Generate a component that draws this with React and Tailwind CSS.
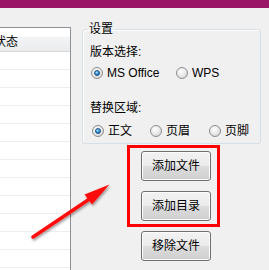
import React from "react";

const font = { fontFamily: '"Liberation Sans", "Noto Sans CJK SC", sans-serif' };

function Radio({ checked, label, className }) {
  return (
    <div className={`flex items-center gap-[4px] ${className || ""}`}>
      <span className="w-[12px] h-[12px] rounded-full border border-[#8c8e90] bg-[radial-gradient(circle_at_40%_35%,#ffffff,#e6e6e6_55%,#c9c9c9)] flex items-center justify-center shrink-0">
        {checked && (
          <span className="w-[6px] h-[6px] rounded-full border border-[#1b4f80] bg-[radial-gradient(circle_at_40%_35%,#b5e6ff,#2b8fd6_55%,#0f4677)]" />
        )}
      </span>
      <span className="text-[12px] leading-[16px] text-black">{label}</span>
    </div>
  );
}

function WinButton({ children }) {
  return (
    <button className="w-[70px] h-[30px] rounded-[3px] border border-[#707070] bg-[linear-gradient(#f2f2f2,#ebebeb_50%,#dddddd_50%,#cfcfcf)] shadow-[inset_0_0_0_1px_#fcfcfc] text-[12px] text-black flex items-center justify-center">
      {children}
    </button>
  );
}

export default function App() {
  const rows = Array.from({ length: 12 });

  return (
    <div className="relative w-[269px] h-[270px] overflow-hidden bg-[#f0f0f0]" style={font}>
      {/* title bar remnant */}
      <div className="h-[8px] bg-[#9b1566] overflow-hidden">
        <div className="pl-[164px] -mt-[14px] text-[14px] leading-[14px] text-white">批量替换</div>
      </div>

      <div className="flex items-start">
        {/* file list */}
        <div className="w-[71px] h-[262px] mt-[19px] border-t border-r border-[#8e9196] bg-white">
          <div className="h-[24px] border-b border-[#d8d8d8] bg-[linear-gradient(#ffffff,#ffffff_35%,#f3f4f6_40%,#eaebec)] flex items-center pt-[5px]">
            <span className="-ml-[6px] text-[12px] leading-[16px] text-black">状态</span>
          </div>
          {rows.map((_, i) => (
            <div key={i} className="h-[18px] border-b border-[#eeeeee]" />
          ))}
        </div>

        {/* settings */}
        <div className="ml-[11px] flex flex-col">
          <fieldset className="w-[179px] h-[121px] mt-[15px] border border-[#d5dfe5] rounded-[3px] shadow-[inset_1px_1px_0_#ffffff]">
            <legend className="ml-[4px] px-[2px] text-[12px] leading-[12px] text-black">设置</legend>
            <div className="pl-[7px] mt-[9px] text-[12px] leading-[16px] text-black">版本选择:</div>
            <div className="flex pl-[8px] mt-[5px]">
              <Radio checked label="MS Office" className="w-[85px]" />
              <Radio label="WPS" />
            </div>
            <div className="pl-[7px] mt-[19px] text-[12px] leading-[16px] text-black">替换区域:</div>
            <div className="flex pl-[9px] mt-[7px]">
              <Radio checked label="正文" className="w-[58px]" />
              <Radio label="页眉" className="w-[59px]" />
              <Radio label="页脚" />
            </div>
          </fieldset>

          <div className="ml-[45px] mt-[1px] w-[93px] border-[3px] border-[#ff0000] pl-[11px] py-[3px] flex flex-col gap-[10px]">
            <WinButton>添加文件</WinButton>
            <WinButton>添加目录</WinButton>
          </div>

          <div className="ml-[59px] mt-[4px]">
            <WinButton>移除文件</WinButton>
          </div>
        </div>
      </div>

      {/* annotation arrow */}
      <svg className="absolute inset-0 pointer-events-none" width="269" height="270" viewBox="0 0 269 270">
        <defs>
          <filter id="sh" x="-20%" y="-20%" width="140%" height="140%">
            <feDropShadow dx="1" dy="2" stdDeviation="1.2" floodColor="#000" floodOpacity="0.35" />
          </filter>
        </defs>
        <g filter="url(#sh)">
          <line x1="33" y1="237" x2="91" y2="198" stroke="#ff0a0a" strokeWidth="3.5" strokeLinecap="round" />
          <polygon points="109.5,184.5 84.5,194.5 92,204.5" fill="#ff0a0a" />
        </g>
      </svg>
    </div>
  );
}
